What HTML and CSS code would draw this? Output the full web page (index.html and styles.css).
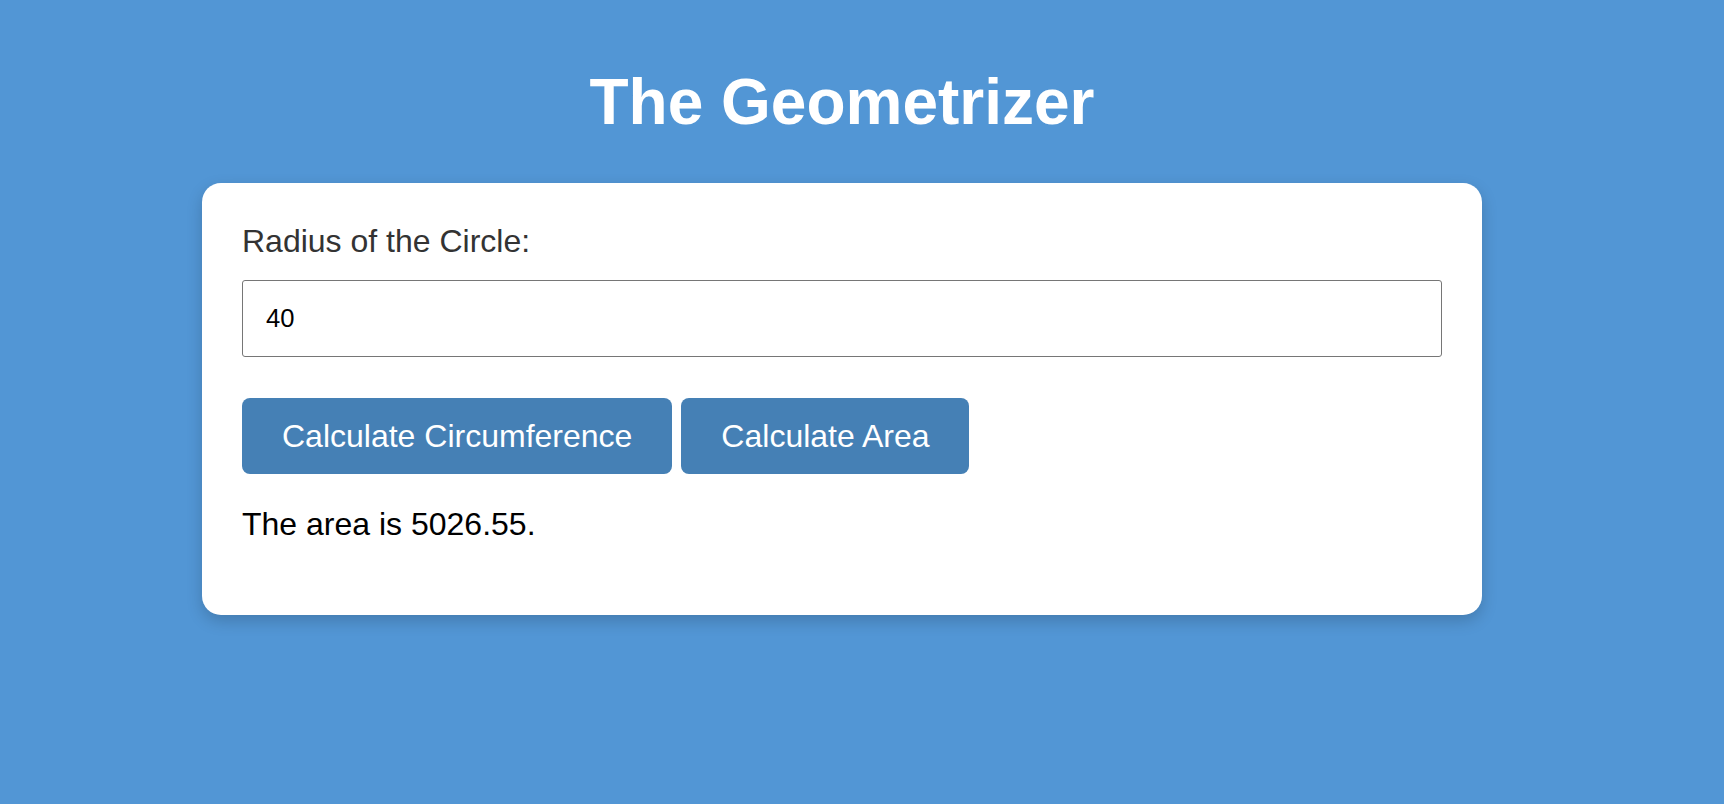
FILE: index.html
```html
<!DOCTYPE html>
<html lang="en">
<head>
<meta charset="utf-8">
<title>The Geometrizer</title>
<link rel="stylesheet" href="styles.css">
</head>
<body>
  <main class="page">
    <h1 class="title">The Geometrizer</h1>
    <section class="card">
      <label class="field-label" for="radius">Radius of the Circle:</label>
      <input class="field-input" id="radius" type="text" value="40">
      <div class="actions">
        <button class="btn" type="button">Calculate Circumference</button>
        <button class="btn" type="button">Calculate Area</button>
      </div>
      <p class="result">The area is 5026.55.</p>
    </section>
  </main>
</body>
</html>
```

FILE: styles.css
```css
html, body {
  margin: 0;
  padding: 0;
}

body {
  background: #5296d5;
  font-family: "Liberation Sans", Arial, Helvetica, sans-serif;
  min-height: 804px;
  padding-right: 40px;
  box-sizing: border-box;
}

.page {
  max-width: 1280px;
  margin: 0 auto;
  padding-top: 66px;
}

.title {
  margin: 0 0 43px;
  text-align: center;
  color: #ffffff;
  font-size: 64px;
  font-weight: 700;
  line-height: 1.149;
}

.card {
  background: #ffffff;
  border-radius: 19px;
  padding: 40px;
  box-shadow: 0 6px 16px rgba(0, 0, 0, 0.18);
  display: flex;
  flex-direction: column;
  align-items: flex-start;
}

.field-label {
  display: block;
  color: #333333;
  font-size: 32px;
  line-height: 36.8px;
  margin-bottom: 21px;
}

.field-input {
  box-sizing: border-box;
  width: 100%;
  height: 77px;
  padding: 0 23px;
  border: 1px solid #767676;
  border-radius: 3px;
  font-family: "Liberation Sans", Arial, Helvetica, sans-serif;
  font-size: 25.6px;
  color: #000000;
  background: #ffffff;
  outline: none;
  margin: 0 0 41px;
}

.actions {
  display: flex;
  gap: 9px;
}

.btn {
  height: 76px;
  padding: 0 40px;
  border: none;
  border-radius: 8px;
  background: #4580b5;
  color: #ffffff;
  font-family: "Liberation Sans", Arial, Helvetica, sans-serif;
  font-size: 32px;
  line-height: 36.8px;
  cursor: pointer;
}

.result {
  margin: 32px 0;
  font-size: 32px;
  line-height: 36.8px;
  color: #000000;
}
```
